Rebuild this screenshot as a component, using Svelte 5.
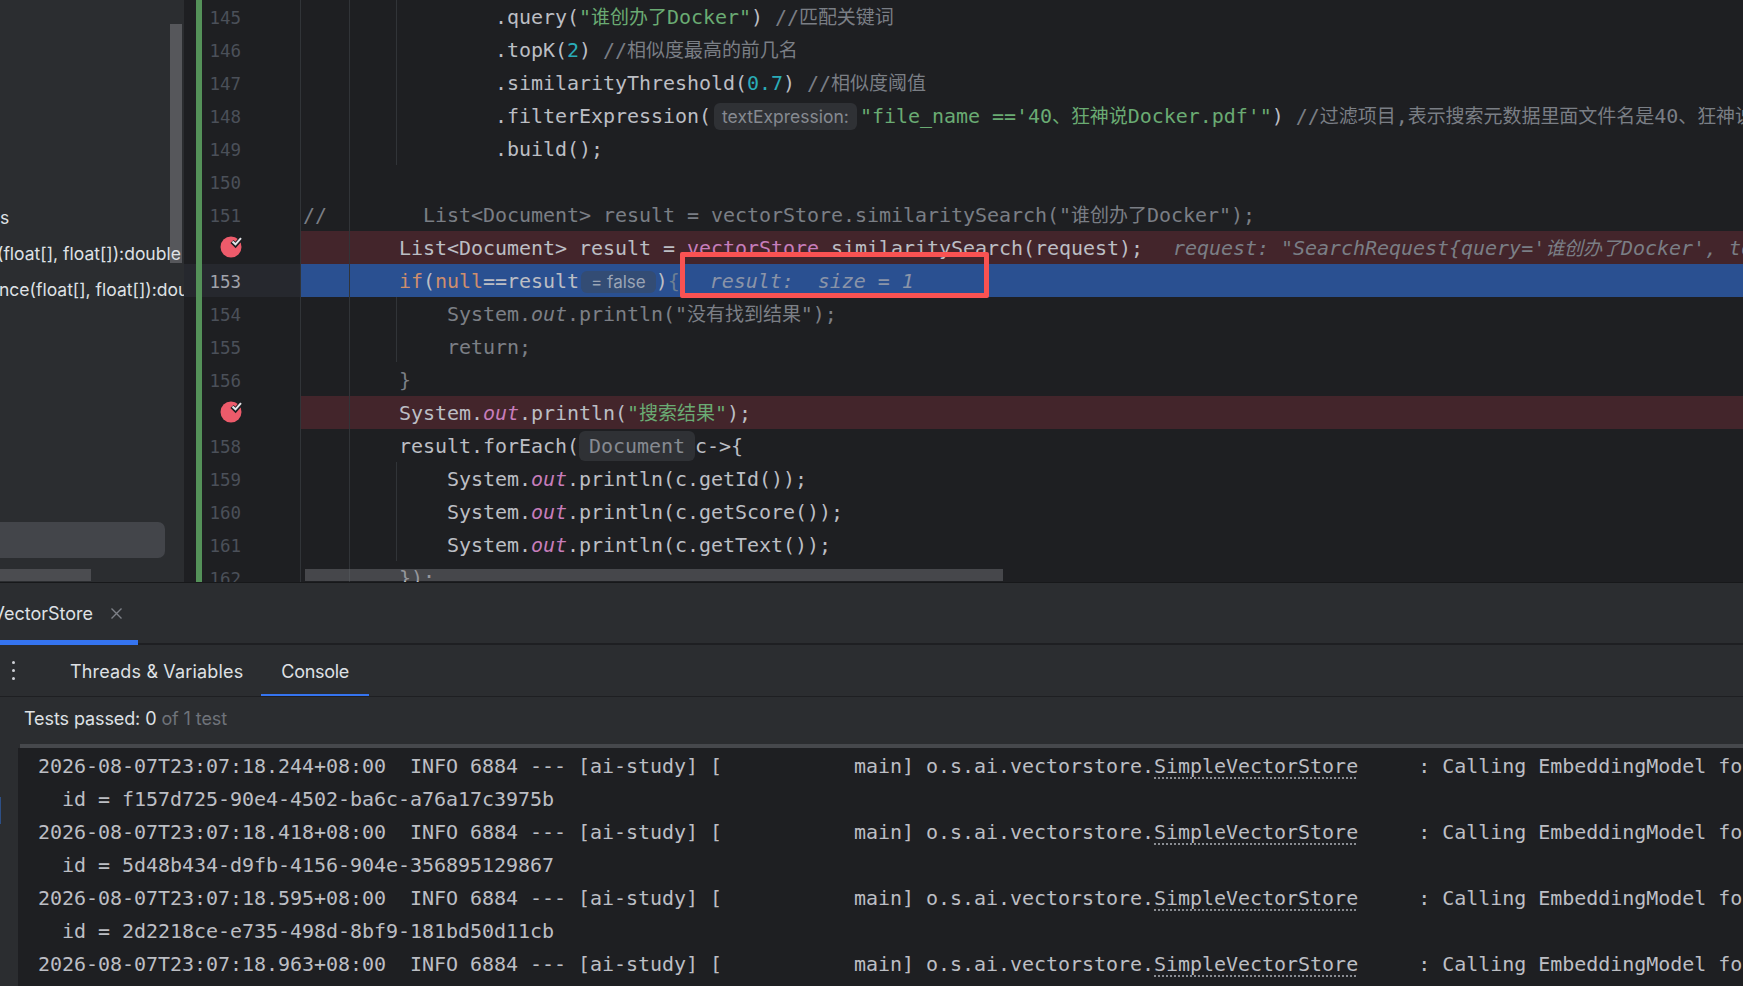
<script>
  const S = 'str', C = 'com', N = 'num', K = 'kw', O = 'out', P = '', H = 'hint'

  const rows = [
    { n: 145, code: [[P, '                .query('], [S, '"谁创办了Docker"'], [P, ') '], [C, '//匹配关键词']] },
    { n: 146, code: [[P, '                .topK('], [N, '2'], [P, ') '], [C, '//相似度最高的前几名']] },
    { n: 147, code: [[P, '                .similarityThreshold('], [N, '0.7'], [P, ') '], [C, '//相似度阈值']] },
    { n: 148, code: [[P, '                .filterExpression('], ['inlay', 'textExpression:'], [S, '"file_name ==\'40、狂神说Docker.pdf\'"'], [P, ') '], [C, '//过滤项目,表示搜索元数据里面文件名是40、狂神说Docker.pdf']] },
    { n: 149, code: [[P, '                .build();']] },
    { n: 150, code: [] },
    { n: 151, code: [[C, '//        List<Document> result = vectorStore.similaritySearch("谁创办了Docker");']] },
    { n: 152, bp: true, kind: 'stop', code: [[P, '        List<Document> result = '], ['field', 'vectorStore'], [P, '.similaritySearch(request);'], [H, '  request: "SearchRequest{query=\'谁创办了Docker\', topK=2, similarityThreshold=0.7}"']] },
    { n: 153, kind: 'current', code: [[P, '        '], [K, 'if'], [P, '('], [K, 'null'], [P, '==result'], ['inlay', '= false'], [P, ')'], ['dim', '{'], [H, '  result:  size = 1']] },
    { n: 154, kind: 'dead', code: [[P, '            System.'], [O, 'out'], [P, '.println('], [P, '"没有找到结果"'], [P, ');']] },
    { n: 155, kind: 'dead', code: [[P, '            return;']] },
    { n: 156, kind: 'dead', code: [[P, '        }']] },
    { n: 157, bp: true, kind: 'stop', code: [[P, '        System.'], [O, 'out'], [P, '.println('], [S, '"搜索结果"'], [P, ');']] },
    { n: 158, code: [[P, '        result.forEach('], ['inlay mono', 'Document'], [P, 'c->{']] },
    { n: 159, code: [[P, '            System.'], [O, 'out'], [P, '.println(c.getId());']] },
    { n: 160, code: [[P, '            System.'], [O, 'out'], [P, '.println(c.getScore());']] },
    { n: 161, code: [[P, '            System.'], [O, 'out'], [P, '.println(c.getText());']] },
    { n: 162, code: [[P, '        });']] }
  ]

  // indent guides: x is relative to the editor's left edge
  const guides = [
    { x: 165, top: 0, h: 582 },
    { x: 212, top: 0, h: 165 },
    { x: 212, top: 297, h: 65 },
    { x: 212, top: 462, h: 99 }
  ]

  const logs = [
    ['2026-08-07T23:07:18.244+08:00', 'f157d725-90e4-4502-ba6c-a76a17c3975b'],
    ['2026-08-07T23:07:18.418+08:00', '5d48b434-d9fb-4156-904e-356895129867'],
    ['2026-08-07T23:07:18.595+08:00', '2d2218ce-e735-498d-8bf9-181bd50d11cb'],
    ['2026-08-07T23:07:18.963+08:00', null]
  ]

  const logHead = '  INFO 6884 --- [ai-study] [           main] o.s.ai.vectorstore.'
  const logTail = '     : Calling EmbeddingModel for document'

  // CJK runs get their own span, the fallback font is a bit narrower in the IDE
  function runs(text) {
    return text.split(/([\u3001\u4e00-\u9fff]+)/).filter(Boolean).map((t) => ({
      t,
      cjk: /^[\u3001\u4e00-\u9fff]/.test(t)
    }))
  }
</script>

<div class="ide">
  <div class="top">
    <aside class="tree">
      <div class="tree-row">s</div>
      <div class="tree-row shift">(float[], float[]):double</div>
      <div class="tree-row shift2">nce(float[], float[]):dou</div>
      <div class="tree-gap"></div>
      <div class="tree-selected"></div>
      <i class="tree-vbar"></i>
      <i class="tree-hbar"></i>
    </aside>

    <section class="editor">
      {#each rows as row}
        <div class="row {row.kind ?? ''}">
          <div class="gutter">
            <span class="changed"></span>
            {#if row.bp}
              <span class="lineno">
                <svg class="bp" width="26" height="26" viewBox="0 0 26 26">
                  <circle cx="12" cy="14" r="10.5" fill="#ed5b6b" />
                  <path d="M13 8.5 L16.5 12 L22.5 5" fill="none" stroke="#1e1f22" stroke-width="4.5" />
                  <path d="M13.5 8.5 L16.5 11.3 L22 5.2" fill="none" stroke="#e4e6ea" stroke-width="2" />
                </svg>
              </span>
            {:else}
              <span class="lineno">{row.n}</span>
            {/if}
          </div>
          <div class="code">
            {#each row.code as [cls, text]}
              <span class={cls}>{#each runs(text) as r}{#if r.cjk}<span class="cjk">{r.t}</span>{:else}{r.t}{/if}{/each}</span>
            {/each}
          </div>
        </div>
      {/each}

      {#each guides as g}
        <i class="guide" style="left: {g.x}px; top: {g.top}px; height: {g.h}px"></i>
      {/each}
      <i class="guide sep"></i>
      <i class="editor-hbar"></i>
      <i class="redbox"></i>
    </section>
  </div>

  <div class="panel">
    <div class="runtabs">
      <div class="runtab">
        <span class="runtab-name">VectorStore</span>
        <svg width="13" height="13" viewBox="0 0 13 13"><path d="M1.5 1.5 L11.5 11.5 M11.5 1.5 L1.5 11.5" stroke="#7d8087" stroke-width="1.4" /></svg>
      </div>
    </div>

    <div class="subtabs">
      <span class="dots"><i></i><i></i><i></i></span>
      <span class="subtab threads">Threads &amp; Variables</span>
      <span class="subtab active">Console</span>
    </div>

    <div class="status">Tests passed: 0 <em>of 1 test</em></div>

    <div class="console-wrap">
      <div class="console-side"><i></i></div>
      <div class="console">
        {#each logs as [time, id]}
          <div class="log">{time + logHead}<span class="link">SimpleVectorStore</span>{logTail}</div>
          {#if id}
            <div class="log">{'  id = ' + id}</div>
          {/if}
        {/each}
      </div>
    </div>
  </div>
</div>

<style>
  :global(body) {
    margin: 0;
    background: #1e1f22;
    overflow: hidden;
  }

  .ide {
    width: 1743px;
    height: 986px;
    display: flex;
    flex-direction: column;
    overflow: hidden;
    font-family: Inter, "Noto Sans CJK SC", sans-serif;
    color: #dfe1e5;
  }

  .top {
    height: 583px;
    display: flex;
    overflow: hidden;
    box-sizing: border-box;
    border-bottom: 1px solid #17181a;
    flex: none;
  }

  /* project tree */
  .tree {
    position: relative;
    width: 184px;
    flex: none;
    background: #2b2d30;
    padding-top: 200px;
    box-sizing: border-box;
    overflow: hidden;
    font-size: 17.5px;
  }

  .tree-row {
    position: relative;
    z-index: 1;
    height: 36px;
    line-height: 36px;
    white-space: nowrap;
    color: #dfe1e5;
  }

  .shift {
    margin-left: -3px;
  }

  .shift2 {
    margin-left: -1px;
  }

  .tree-gap {
    height: 214px;
  }

  .tree-selected {
    width: 165px;
    height: 36px;
    background: #43454a;
    border-radius: 0 7px 7px 0;
  }

  .tree-vbar {
    position: absolute;
    left: 170px;
    top: 24px;
    width: 12px;
    height: 239px;
    background: #56575b;
  }

  .tree-hbar {
    position: absolute;
    left: 0;
    top: 569px;
    width: 91px;
    height: 12px;
    background: #4b4c50;
  }

  /* editor */
  .editor {
    position: relative;
    flex: 1;
    min-width: 0;
    overflow: hidden;
    background: #1e1f22;
  }

  .row {
    height: 33px;
    display: flex;
  }

  .gutter {
    width: 116px;
    flex: none;
    display: flex;
    box-sizing: border-box;
    padding-left: 12px;
    font: 17.5px/36px "DejaVu Sans Mono", monospace;
    color: #4b5059;
  }

  .changed {
    width: 6px;
    background: #549159;
    flex: none;
  }

  .lineno {
    position: relative;
    width: 39px;
    text-align: right;
    flex: none;
  }

  .bp {
    position: absolute;
    left: 17px;
    top: 2px;
  }

  .current .gutter {
    background: #26282e;
    color: #a1a3ab;
  }

  .code {
    flex: 1;
    min-width: 0;
    height: 33px;
    padding-left: 3px;
    font: 20px/34px "DejaVu Sans Mono", "Noto Sans CJK SC", monospace;
    letter-spacing: -0.04px;
    white-space: pre;
    overflow: hidden;
    color: #bcbec4;
  }

  .stop .code {
    background: #43252b;
  }

  .current .code {
    background: #2a5091;
  }

  .dead .code,
  .dead .code span {
    color: #7c7f86;
  }

  .cjk {
    font-size: 19px;
  }

  .str { color: #6aab73; }
  .com { color: #7a7e85; }
  .num { color: #2aacb8; }
  .kw { color: #cf8e6d; }
  .out { color: #c77dbb; font-style: italic; }
  .field { color: #c77dbb; }
  .dim { color: #6d7f93; }

  .hint {
    margin-left: 6px;
    color: #7a7e85;
    font-style: italic;
  }

  .current .hint {
    margin-left: 6px;
    color: #8a94a8;
  }

  .inlay {
    display: inline-block;
    height: 27px;
    line-height: 27px;
    margin: 0 3px;
    padding: 0 8px;
    border-radius: 6px;
    background: #2f3135;
    color: #868a91;
    font-family: Inter, sans-serif;
    font-size: 17.5px;
    letter-spacing: 0;
    vertical-align: 0;
  }

  .inlay.mono {
    height: 30px;
    line-height: 30px;
    margin: 0;
    padding: 0 10px;
    font-family: "DejaVu Sans Mono", monospace;
    font-size: 20px;
    letter-spacing: -0.04px;
  }

  .current .inlay {
    margin: 0 0 0 2px;
    padding: 0 10px;
    background: #334c74;
    color: #9aa4b5;
    height: 22px;
    line-height: 22px;
    font-size: 17px;
  }

  .guide {
    position: absolute;
    width: 1px;
    background: #313438;
  }

  .sep {
    left: 116px;
    top: 0;
    bottom: 0;
  }

  .editor-hbar {
    position: absolute;
    left: 121px;
    top: 569px;
    width: 698px;
    height: 12px;
    background: rgba(110, 111, 115, 0.5);
  }

  .redbox {
    position: absolute;
    left: 496px;
    top: 252px;
    width: 309px;
    height: 46px;
    box-sizing: border-box;
    border: 5px solid #f95252;
    border-radius: 2px;
  }

  /* bottom tool window */
  .panel {
    flex: 1;
    display: flex;
    flex-direction: column;
    background: #2b2d30;
    min-height: 0;
  }

  .runtabs {
    height: 62px;
    flex: none;
    box-sizing: border-box;
    border-bottom: 2px solid #1e1f22;
    display: flex;
  }

  .runtab {
    width: 138px;
    box-sizing: border-box;
    height: 62px;
    border-bottom: 5px solid #3574f0;
    display: flex;
    align-items: center;
    justify-content: flex-end;
    padding: 4px 15px 0 0;
    gap: 17px;
    font-size: 18px;
    overflow: hidden;
    white-space: nowrap;
  }

  .runtab > * {
    flex: none;
  }

  .subtabs {
    height: 52px;
    flex: none;
    box-sizing: border-box;
    border-bottom: 1px solid #1e1f22;
    display: flex;
    align-items: stretch;
    font-size: 18px;
  }

  .dots {
    width: 26px;
    display: flex;
    flex-direction: column;
    align-items: center;
    justify-content: center;
    gap: 5px;
    margin-right: 24px;
  }

  .dots i {
    width: 3px;
    height: 3px;
    border-radius: 50%;
    background: #ced0d6;
  }

  .subtab {
    padding: 0 20px;
    line-height: 53px;
  }

  .threads {
    letter-spacing: 0.16px;
  }

  .active {
    letter-spacing: -0.3px;
    box-shadow: inset 0 -2px 0 #3574f0;
    margin-left: -2px;
  }

  .status {
    height: 51px;
    flex: none;
    box-sizing: border-box;
    padding-left: 24px;
    line-height: 44px;
    font-size: 18px;
    letter-spacing: -0.1px;
  }

  .status em {
    font-style: normal;
    color: #6f737a;
  }

  .console-wrap {
    flex: 1;
    display: flex;
    min-height: 0;
    position: relative;
  }

  .console-wrap::before {
    content: "";
    position: absolute;
    left: 20px;
    right: 0;
    top: -4px;
    height: 4px;
    background: #46484c;
  }

  .console-side {
    width: 18px;
    flex: none;
    position: relative;
  }

  .console-side i {
    position: absolute;
    left: 0;
    top: 49px;
    width: 1px;
    height: 27px;
    background: #2d4f86;
  }

  .console {
    flex: 1;
    min-width: 0;
    background: #1e1f22;
    padding: 2px 0 0 20px;
    overflow: hidden;
    font: 20px/33px "DejaVu Sans Mono", monospace;
    letter-spacing: -0.04px;
    color: #bcbec4;
  }

  .log {
    height: 33px;
    white-space: pre;
  }

  .link {
    text-decoration: underline dotted #8a8d93;
    text-underline-offset: 4px;
  }
</style>
